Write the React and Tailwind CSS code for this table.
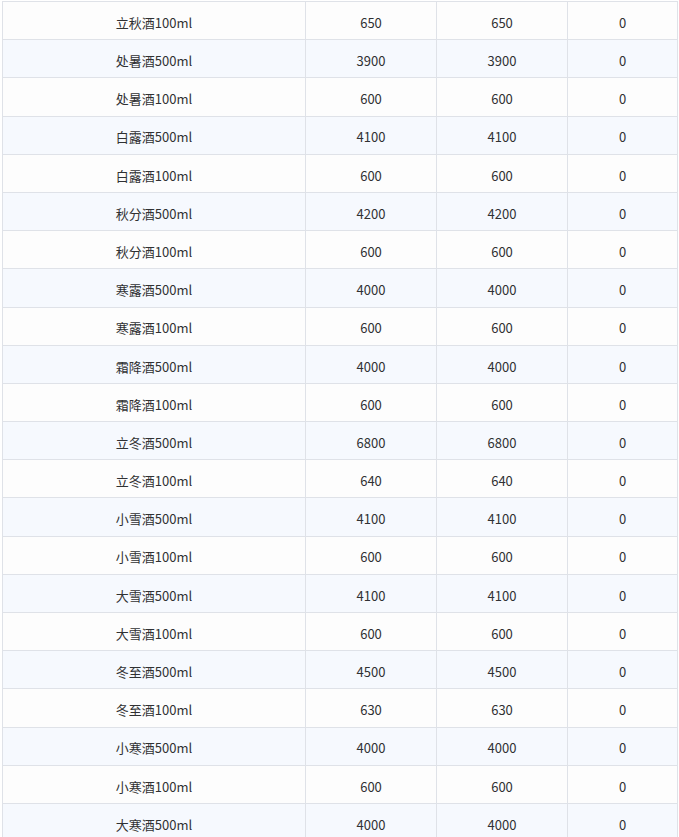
import React from "react";

const rows = [
  ["立秋酒100ml", "650", "650", "0"],
  ["处暑酒500ml", "3900", "3900", "0"],
  ["处暑酒100ml", "600", "600", "0"],
  ["白露酒500ml", "4100", "4100", "0"],
  ["白露酒100ml", "600", "600", "0"],
  ["秋分酒500ml", "4200", "4200", "0"],
  ["秋分酒100ml", "600", "600", "0"],
  ["寒露酒500ml", "4000", "4000", "0"],
  ["寒露酒100ml", "600", "600", "0"],
  ["霜降酒500ml", "4000", "4000", "0"],
  ["霜降酒100ml", "600", "600", "0"],
  ["立冬酒500ml", "6800", "6800", "0"],
  ["立冬酒100ml", "640", "640", "0"],
  ["小雪酒500ml", "4100", "4100", "0"],
  ["小雪酒100ml", "600", "600", "0"],
  ["大雪酒500ml", "4100", "4100", "0"],
  ["大雪酒100ml", "600", "600", "0"],
  ["冬至酒500ml", "4500", "4500", "0"],
  ["冬至酒100ml", "630", "630", "0"],
  ["小寒酒500ml", "4000", "4000", "0"],
  ["小寒酒100ml", "600", "600", "0"],
  ["大寒酒500ml", "4000", "4000", "0"],
];

export default function App() {
  return (
    <div
      className="w-[679px] h-[837px] overflow-hidden bg-white pt-[1px] pl-[2px] pr-[1px]"
      style={{ fontFamily: '"Noto Sans CJK SC", "Noto Sans", sans-serif' }}
    >
      <div className="border-l border-t border-[#dfe2e8]">
        {rows.map((r, i) => (
          <div
            key={i}
            className={`flex h-[38.19px] border-b border-[#dfe2e8] text-[13px] text-[#303133] ${
              i % 2 === 1 ? "bg-[#f6f9fe]" : "bg-[#fdfdfd]"
            }`}
          >
            <div className="w-[303px] shrink-0 border-r border-[#dfe2e8] flex items-center justify-center pt-[4px]">
              {r[0]}
            </div>
            <div className="w-[131px] shrink-0 border-r border-[#dfe2e8] flex items-center justify-center pt-[4px]">
              {r[1]}
            </div>
            <div className="w-[131px] shrink-0 border-r border-[#dfe2e8] flex items-center justify-center pt-[4px]">
              {r[2]}
            </div>
            <div className="w-[110px] shrink-0 border-r border-[#dfe2e8] flex items-center justify-center pt-[4px]">
              {r[3]}
            </div>
          </div>
        ))}
      </div>
    </div>
  );
}
